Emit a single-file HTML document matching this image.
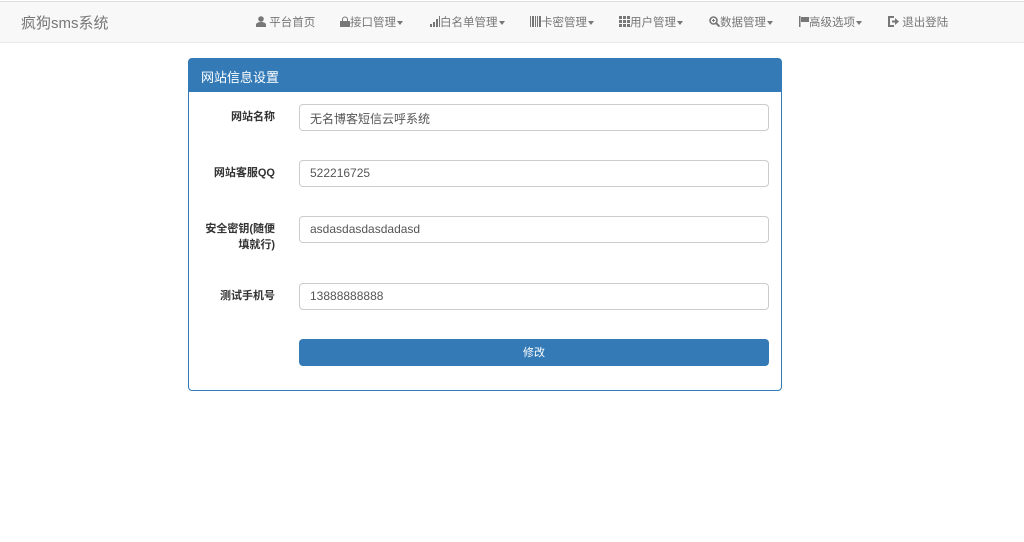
<!DOCTYPE html>
<html><head><meta charset="utf-8"><style>
*{box-sizing:border-box;margin:0;padding:0}
body{width:1024px;height:542px;background:#fff;font-family:"Liberation Sans","Noto Sans CJK SC",sans-serif;font-size:12px;color:#333;position:relative;overflow:hidden}
.nav{position:absolute;left:0;top:1px;width:1024px;height:42px;background:#f8f8f8;border-top:1px solid #ddd;border-bottom:1px solid #e7e7e7}
.brand{position:absolute;left:21px;top:10px;font-size:15px;color:#777}
.item{position:absolute;top:14px;font-size:11.5px;color:#777;white-space:nowrap;line-height:14px}
.item svg{display:inline-block;vertical-align:-1px;fill:#777}
.car{display:inline-block;border-top:4px solid #777;border-left:3px solid transparent;border-right:3px solid transparent;vertical-align:middle;margin-left:1px}
.panel{position:absolute;left:188px;top:58px;width:594px;height:333px;border:1px solid #337ab7;border-radius:4px}
.ph{background:#337ab7;color:#fff;height:33px;padding:8px 12px;font-size:13px}
.lab{position:absolute;right:506px;width:80px;text-align:right;font-weight:bold;font-size:11px;line-height:16px}
.inp{position:absolute;left:110px;width:470px;height:27px;border:1px solid #ccc;border-radius:4px;padding:5px 10px;font-size:12px;color:#555}
.btn{position:absolute;left:110px;top:280px;width:470px;height:27px;background:#337ab7;border-radius:4px;color:#fff;text-align:center;line-height:28px;font-size:11px}
</style></head><body>
<div class="nav">
<div class="brand">疯狗sms系统</div>
<div class="item" style="left:256px"><svg width="10" height="11" viewBox="0 0 10 11"><circle cx="5" cy="3" r="2.8"/><path d="M0 11V9c0-2 2-3 5-3s5 1 5 3v2z"/></svg> 平台首页</div>
<div class="item" style="left:340px"><svg width="10" height="11" viewBox="0 0 10 11"><path d="M2 5V3.5a3 3 0 0 1 6 0V5H7V3.5a2 2 0 0 0-4 0V5z"/><rect x="0" y="5" width="10" height="6"/></svg>接口管理<span class="car"></span></div>
<div class="item" style="left:430px"><svg width="10" height="11" viewBox="0 0 10 11"><rect x="0" y="8" width="2" height="3"/><rect x="3" y="6" width="2" height="5"/><rect x="6" y="3" width="2" height="8"/><rect x="9" y="0" width="1" height="11"/></svg>白名单管理<span class="car"></span></div>
<div class="item" style="left:530px"><svg width="11" height="11" viewBox="0 0 11 11"><rect x="0" y="0" width="1" height="11"/><rect x="2" y="0" width="2" height="11"/><rect x="5" y="0" width="1" height="11"/><rect x="7" y="0" width="1" height="11"/><rect x="9" y="0" width="2" height="11"/></svg>卡密管理<span class="car"></span></div>
<div class="item" style="left:619px"><svg width="11" height="11" viewBox="0 0 11 11"><path d="M0 0h3v3H0zM4 0h3v3H4zM8 0h3v3H8zM0 4h3v3H0zM4 4h3v3H4zM8 4h3v3H8zM0 8h3v3H0zM4 8h3v3H4zM8 8h3v3H8z"/></svg>用户管理<span class="car"></span></div>
<div class="item" style="left:709px"><svg width="11" height="11" viewBox="0 0 11 11"><circle cx="4.5" cy="4.5" r="3.5" fill="none" stroke="#777" stroke-width="1.6"/><path d="M7 7l3.5 3.5" stroke="#777" stroke-width="2"/><path d="M3 4.5h3M4.5 3v3" stroke="#777" stroke-width="1"/></svg>数据管理<span class="car"></span></div>
<div class="item" style="left:799px"><svg width="10" height="11" viewBox="0 0 10 11"><rect x="0" y="0" width="1.5" height="11"/><path d="M2 1h8v5H2z"/></svg>高级选项<span class="car"></span></div>
<div class="item" style="left:888px"><svg width="11" height="11" viewBox="0 0 11 11"><path d="M6 1H1v9h5" fill="none" stroke="#777" stroke-width="2"/><path d="M4 4.5h3V2l4 3.5L7 9V6.5H4z"/></svg> 退出登陆</div>
</div>
<div class="panel">
<div class="ph">网站信息设置</div>
<div class="lab" style="top:50px">网站名称</div>
<div class="inp" style="top:45px">无名博客短信云呼系统</div>
<div class="lab" style="top:106px">网站客服QQ</div>
<div class="inp" style="top:101px">522216725</div>
<div class="lab" style="top:162px">安全密钥(随便填就行)</div>
<div class="inp" style="top:157px">asdasdasdasdadasd</div>
<div class="lab" style="top:229px">测试手机号</div>
<div class="inp" style="top:224px">13888888888</div>
<div class="btn">修改</div>
</div>
</body></html>
